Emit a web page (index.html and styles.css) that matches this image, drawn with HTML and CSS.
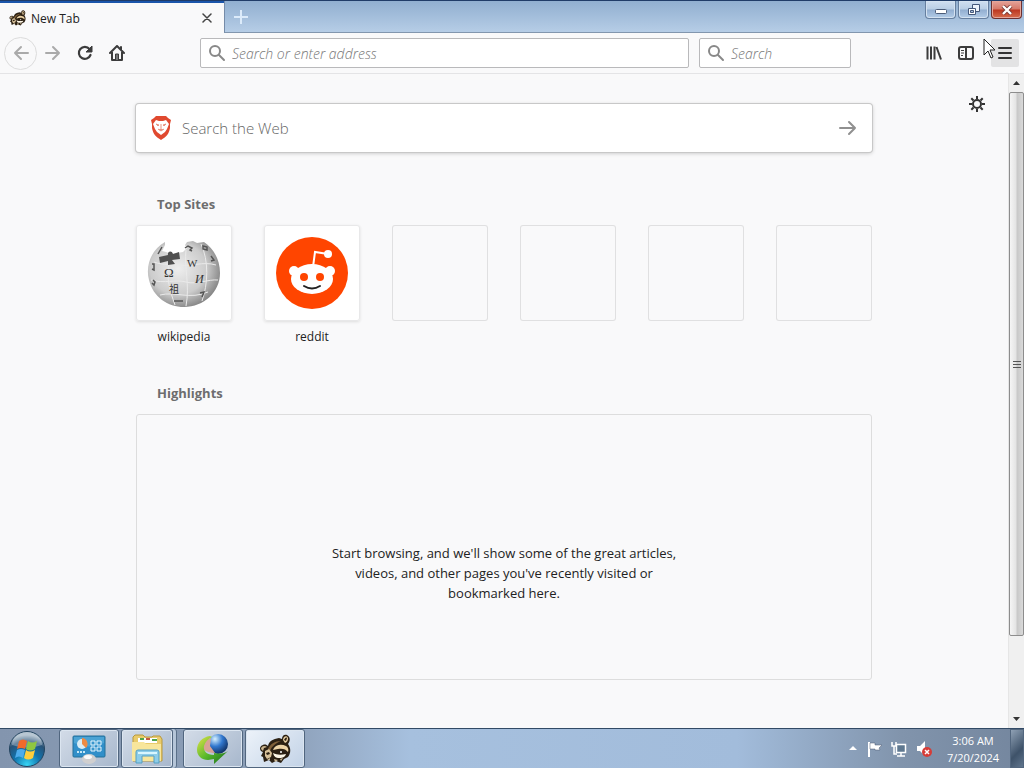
FILE: index.html
```
<!DOCTYPE html>
<html lang="en">
<head>
    <meta charset="UTF-8">
    <meta name="viewport" content="width=device-width, initial-scale=1.0">
    <title>New Tab</title>
    <link rel="stylesheet" href="styles.css">
</head>
<body>
    <!-- raccoon is used by the tab and the taskbar -->
    <svg class="defs" width="0" height="0" aria-hidden="true">
        <symbol id="raccoon" viewBox="0 0 32 30">
            <path d="M4 18C0 17 0 12 4 11c2-1 4 0 5 1 1-5 5-7 11-8l3 1c0-4 3-5 5-4 4 2 3 7 1 9 3 4 3 9 0 13l-4 2-3 4-5-2-4 2-3-3-5 2-1-5-2-1z" fill="#2b2013"/>
            <path d="M2 15c0-3 4-4 6-2l-3 1-1 3z" fill="#c9b48e"/>
            <path d="M24 6c0-4 4-5 5-2 0 3-1 4-3 5z" fill="#e7cfa4"/>
            <path d="M25 6c1-2 2-3 3-2l-1 3z" fill="#2b2013"/>
            <path d="M9 15c2-5 7-8 13-8-5 2-9 5-11 10z" fill="#806039"/>
            <path d="M15 14c3-4 8-4 12-2 2 1 3 4 2 6-2-3-6-4-10-3-2 0-3 1-5 1z" fill="#ecd3a6"/>
            <path d="M6 17l4-2 3 4-1 4-4 2-2-3z" fill="#d9c29a"/>
            <path d="M14 19c4 2 8 2 13 1-1 4-5 4-7 4-3 0-5-1-6-5z" fill="#fdf6e6"/>
            <path d="M15 25l4 1-3 2zM21 25l3-1-2 3zM8 26l3-2v2z" fill="#d0bd9a"/>
            <path d="M7 19l3-1 1 2-3 1z" fill="#2b2013"/>
            <circle cx="22" cy="18" r="1" fill="#fff"/>
        </symbol>
        <symbol id="glass" viewBox="0 0 18 18">
            <circle cx="7" cy="7" r="5" fill="none" stroke="currentColor" stroke-width="2"/>
            <path d="M11 11l5 5" stroke="currentColor" stroke-width="2" stroke-linecap="round"/>
        </symbol>
    </svg>

    <header class="titlebar">
        <div class="tab">
            <svg class="tab-icon" width="17" height="16"><use href="#raccoon"/></svg>
            <span class="tab-title">New Tab</span>
            <button class="tab-close" aria-label="Close tab">
                <svg width="10" height="10" viewBox="0 0 10 10"><path d="M1 1l8 8M9 1L1 9" stroke="#444" stroke-width="1.500" stroke-linecap="round"/></svg>
            </button>
        </div>
        <button class="new-tab" aria-label="New tab">
            <svg width="14" height="14" viewBox="0 0 14 14"><path d="M7 0v14M0 7h14" stroke="#dcebfa" stroke-width="2"/></svg>
        </button>
        <div class="window-buttons">
            <button class="win" aria-label="Minimize">
                <svg class="minimize" width="12" height="6" viewBox="0 0 12 6"><rect x=".5" y=".5" width="11" height="4" rx="1" fill="#fff" stroke="#4b5c78"/></svg>
            </button>
            <button class="win" aria-label="Restore">
                <svg width="12" height="12" viewBox="0 0 12 12"><path d="M4.500.5h7v7h-7z" fill="#eef4fb" stroke="#44587a"/><path d="M.5 4.500h7v6h-7z" fill="#fff" stroke="#44587a"/><path d="M2.500 6.500h3v2h-3z" fill="#a5bddb" stroke="#44587a"/></svg>
            </button>
            <button class="win win-close" aria-label="Close">
                <svg width="12" height="10" viewBox="0 0 12 10"><path d="M2 1l8 8M10 1L2 9" stroke="#7b3934" stroke-width="4"/><path d="M2 1l8 8M10 1L2 9" stroke="#fff" stroke-width="2.400"/></svg>
            </button>
        </div>
    </header>

    <nav class="toolbar">
        <button class="tool back" aria-label="Back">
            <svg width="16" height="16" viewBox="0 0 16 16"><path d="M15 8H2M8 2L2 8l6 6" fill="none" stroke="#aaa" stroke-width="2" stroke-linecap="round" stroke-linejoin="round"/></svg>
        </button>
        <button class="tool" aria-label="Forward">
            <svg width="16" height="16" viewBox="0 0 16 16"><path d="M1 8h13M8 2l6 6-6 6" fill="none" stroke="#aaa" stroke-width="2" stroke-linecap="round" stroke-linejoin="round"/></svg>
        </button>
        <button class="tool" aria-label="Reload">
            <svg width="16" height="16" viewBox="0 0 16 16"><path d="M13.500 10A6 6 0 1 1 12.500 4" fill="none" stroke="#3c3c3c" stroke-width="2.200" stroke-linecap="round"/><path d="M15 1v6H9z" fill="#3c3c3c" stroke="#3c3c3c" stroke-linejoin="round"/></svg>
        </button>
        <button class="tool" aria-label="Home">
            <svg width="16" height="16" viewBox="0 0 16 16"><path d="M1 8l7-7 7 7M3 7v8h10V7M12 2v3" fill="none" stroke="#3c3c3c" stroke-width="2" stroke-linecap="round" stroke-linejoin="round"/><path d="M6.500 15V9h3v6" fill="#777" stroke="#3c3c3c"/></svg>
        </button>
        <label class="field address">
            <svg width="18" height="18"><use href="#glass"/></svg>
            <input type="text" placeholder="Search or enter address" aria-label="Search or enter address">
        </label>
        <label class="field search">
            <svg width="18" height="18"><use href="#glass"/></svg>
            <input type="text" placeholder="Search" aria-label="Search">
        </label>
        <div class="tools-right">
            <button class="tool" aria-label="Library">
                <svg width="16" height="16" viewBox="0 0 16 16"><path d="M1.500 1.500v13M5 1.500v13M8.500 1.500v13M10.500 2l4.500 12.500" fill="none" stroke="#3c3c3c" stroke-width="2"/></svg>
            </button>
            <button class="tool" aria-label="Sidebars">
                <svg width="16" height="16" viewBox="0 0 16 16"><rect x="1" y="2" width="14" height="12" rx="2" fill="none" stroke="#3c3c3c" stroke-width="2"/><path d="M8 2v12" stroke="#3c3c3c" stroke-width="2"/><path d="M3 5.500h3M3 8h3M3 10.500h2" stroke="#3c3c3c"/></svg>
            </button>
            <button class="tool menu" aria-label="Open menu">
                <svg width="14" height="14" viewBox="0 0 14 14"><path d="M1 2h12M1 7h12M1 12h12" stroke="#333" stroke-width="2" stroke-linecap="round"/></svg>
                <svg class="cursor" width="13" height="21" viewBox="0 0 13 21" aria-hidden="true"><path d="M1 1v16l4-4 3 7 2-1-3-7h5z" fill="#fff" stroke="#222"/></svg>
            </button>
        </div>
    </nav>

    <div class="viewport">
        <main class="page">
            <button class="settings" aria-label="Customize your New Tab page">
                <svg width="16" height="16" viewBox="0 0 16 16"><circle cx="8" cy="8" r="4" fill="none" stroke="#333" stroke-width="2"/><path d="M8 0v3M8 13v3M0 8h3M13 8h3M2.300 2.300l2.200 2.200M11.500 11.500l2.200 2.200M2.300 13.700l2.200-2.200M11.500 4.500l2.200-2.200" stroke="#333" stroke-width="2"/></svg>
            </button>
            <div class="content">
                <form class="web-search">
                    <svg width="22" height="26" viewBox="0 0 22 26" aria-hidden="true">
                        <path d="M6 1h10l2 2 3 2-1 4 0 4c-1 6-4 9-9 12-5-3-8-6-9-12V9L1 5l3-2z" fill="#e0492f"/>
                        <path d="M6 5l3 1h4l3-1 3 4-2 5-2 3-4 3-4-3-2-3-2-5z" fill="#fff"/>
                        <path d="M6 9l3 1-1 1zM16 9l-3 1 1 1zM11 9v5M8 14l3 2 3-2" fill="#e89583" stroke="#e89583"/>
                    </svg>
                    <input type="text" placeholder="Search the Web" aria-label="Search the Web">
                    <button type="submit" aria-label="Search">
                        <svg width="18" height="16" viewBox="0 0 18 16"><path d="M1 8h15M10 2l6 6-6 6" fill="none" stroke="#909090" stroke-width="2" stroke-linecap="round" stroke-linejoin="round"/></svg>
                    </button>
                </form>

                <section class="top-sites">
                    <h2>Top Sites</h2>
                    <ul class="sites">
                        <li>
                            <a href="#wikipedia">
                                <span class="tile filled">
                                    <svg width="74" height="74" viewBox="0 0 74 74">
                                        <defs>
                                            <radialGradient id="globe" cx=".42" cy=".42" r=".6"><stop offset="0" stop-color="#eee"/><stop offset=".65" stop-color="#ccc"/><stop offset="1" stop-color="#888"/></radialGradient>
                                        </defs>
                                        <path d="M18 6C5 13-2 29 2 44c4 17 19 27 35 27 20 0 36-15 36-34 0-14-7-25-16-31l-7 1-4-2-6 1-2 3 2 3-4 4-6 1-6 1-5-2-4-1 3-6z" fill="url(#globe)"/>
                                        <path d="M7 26c10 4 18 1 27 3s22-4 35 0M4 44c14 4 24-1 35 2s22-3 32-2M13 59c15-4 30 5 48-3M22 28c-3 14 1 27 6 41M39 14c-2 17 4 35 0 56M54 8c8 17 7 40 1 57" fill="none" stroke="#eaeaea"/>
                                        <path d="M12 21l9-2c-1-4 4-5 5-1l6-2 1 7-8 1 3 4-7 1 0-4-8 2z" fill="#505050"/>
                                        <path d="M38 12l3-2 4 2-2 2 2 1M56 10l4 1 0 3-4-1zM64 20l3 4-3 1M5 28l2 0 0 6-2-1M6 44l2 2-1 3-2-2M27 65h9M53 57l4-1-2 5M15 11l-4 7" fill="none" stroke="#555" stroke-width="1.500"/>
                                        <g fill="#333" font-family="Liberation Serif, serif" font-size="13">
                                            <text x="17" y="41">Ω</text><text x="40" y="31" font-size="11">W</text><text x="48" y="47" font-style="italic" font-size="12">И</text><text x="22" y="57" font-family="Noto Sans CJK JP, sans-serif" font-size="10">祖</text>
                                        </g>
                                    </svg>
                                </span>
                                <span class="site-name">wikipedia</span>
                            </a>
                        </li>
                        <li>
                            <a href="#reddit">
                                <span class="tile filled">
                                    <svg width="72" height="72" viewBox="0 0 72 72">
                                        <circle cx="36" cy="36" r="36" fill="#ff4500"/>
                                        <path d="M37 30l2-15 13 2" fill="none" stroke="#fff" stroke-width="2"/>
                                        <circle cx="52" cy="17" r="4" fill="#fff"/>
                                        <circle cx="18" cy="34" r="5" fill="#fff"/><circle cx="54" cy="34" r="5" fill="#fff"/>
                                        <ellipse cx="36" cy="42" rx="21" ry="15" fill="#fff"/>
                                        <circle cx="28" cy="40" r="4" fill="#ff4500"/><circle cx="44" cy="40" r="4" fill="#ff4500"/>
                                        <path d="M28 49q8 5 16 0" fill="none" stroke="#222" stroke-width="2" stroke-linecap="round"/>
                                    </svg>
                                </span>
                                <span class="site-name">reddit</span>
                            </a>
                        </li>
                        <li><span class="tile"></span></li>
                        <li><span class="tile"></span></li>
                        <li><span class="tile"></span></li>
                        <li><span class="tile"></span></li>
                    </ul>
                </section>

                <section class="highlights">
                    <h2>Highlights</h2>
                    <div class="empty-state">
                        <p>Start browsing, and we'll show some of the great articles, videos, and other pages you've recently visited or bookmarked here.</p>
                    </div>
                </section>
            </div>
        </main>
        <div class="scrollbar">
            <button aria-label="Scroll up"><svg width="7" height="4" viewBox="0 0 7 4"><path d="M0 4l3.500-4L7 4z" fill="#333"/></svg></button>
            <div class="track">
                <div class="thumb"><svg width="8" height="8" viewBox="0 0 8 8"><path d="M0 1.500h8M0 4.500h8M0 7.500h8" stroke="#555"/></svg></div>
            </div>
            <button aria-label="Scroll down"><svg width="7" height="4" viewBox="0 0 7 4"><path d="M0 0l3.500 4L7 0z" fill="#333"/></svg></button>
        </div>
    </div>

    <footer class="taskbar">
        <button class="start" aria-label="Start">
            <svg width="38" height="38" viewBox="0 0 38 38">
                <defs>
                    <radialGradient id="orb" cx=".5" cy=".95" r=".85"><stop offset="0" stop-color="#37d5f5"/><stop offset=".45" stop-color="#1173ad"/><stop offset=".8" stop-color="#285277"/><stop offset="1" stop-color="#9aafc0"/></radialGradient>
                </defs>
                <circle cx="19" cy="19" r="17.500" fill="url(#orb)" stroke="#23445f"/>
                <path d="M4 15a15 13 0 0 1 30 0q-15 5-30 0z" fill="#fff" opacity=".3"/>
                <path d="M11 11q4-3 8 0l-2 8q-4-2-8 0z" fill="#f06a2b"/>
                <path d="M20 11q4 3 9 0l-2 8q-5 3-9 0z" fill="#8fc740"/>
                <path d="M9 20q4-2 8 0l-2 8q-4-3-8 0z" fill="#4dacec"/>
                <path d="M18 20q4 3 9 0l-2 8q-5 3-9 0z" fill="#ffce3c"/>
            </svg>
        </button>
        <button class="task" aria-label="Control Panel">
            <svg width="34" height="30" viewBox="0 0 34 30">
                <rect x="1" y="2" width="32" height="21" rx="1" fill="#318fc9" stroke="#247099"/>
                <path d="M2 3h30v6q-15 7-30 0z" fill="#4ba3d4"/>
                <circle cx="10" cy="10" r="5" fill="#d9edf6"/><path d="M10 10V4a6 6 0 0 1 4 10z" fill="#ed8b43"/>
                <path d="M19 7h4v4h-4zM25 7h4v4h-4zM19 13h4v4h-4zM25 13h4v4h-4z" fill="#3a96cc" stroke="#e5f6ff"/>
                <path d="M5 18h9" stroke="#c5e7f5" stroke-width="2" stroke-dasharray="2 1"/>
                <ellipse cx="17" cy="25" rx="7" ry="5" fill="#d0cfcf"/><ellipse cx="16" cy="23" rx="4" ry="2" fill="#fafafa"/>
            </svg>
        </button>
        <button class="task stacked" aria-label="Windows Explorer">
            <svg width="34" height="30" viewBox="0 0 34 30">
                <path d="M3 3l2-2h8l2 2h7l1-1h7l2 3v22H3z" fill="#e9cb6b" stroke="#b8983d"/>
                <path d="M8 4h19v5H8z" fill="#fff"/><path d="M10 5h4M22 6h5" stroke="#4ea44b" stroke-width="2"/><path d="M16 5h4" stroke="#c45943" stroke-width="2"/>
                <path d="M2 8h12l2 2h15v17H2z" fill="#f8e69c"/>
                <path d="M6 29V18q0-2 2-2h19q2 0 2 2v11h-5v-7H12v7z" fill="#8ecde9" stroke="#559fc3"/>
                <path d="M8 19h19" stroke="#d9f6ff" stroke-width="2"/>
            </svg>
        </button>
        <button class="task" aria-label="Download Manager">
            <svg width="34" height="32" viewBox="0 0 34 32">
                <defs>
                    <radialGradient id="ball" cx=".35" cy=".25" r=".75"><stop offset="0" stop-color="#d8f2ff"/><stop offset=".5" stop-color="#3278cf"/><stop offset="1" stop-color="#123368"/></radialGradient>
                    <linearGradient id="arrow" x2="1" y2="1"><stop offset="0" stop-color="#e2e34a"/><stop offset=".5" stop-color="#58b92a"/><stop offset="1" stop-color="#14661c"/></linearGradient>
                </defs>
                <circle cx="22" cy="11" r="10" fill="url(#ball)"/>
                <path d="M6 12q3-5 9-7l-1 8 5 7q-8 0-12-4z" fill="#d8a394"/>
                <path d="M14 3C6 4 1 10 1 17c0 6 5 10 11 10l6-1v5l14-13c-4 3-9 3-14 2v2C11 22 7 18 8 13c1-4 4-7 8-9z" fill="url(#arrow)"/>
            </svg>
        </button>
        <button class="task active" aria-label="New Tab">
            <svg width="34" height="30"><use href="#raccoon"/></svg>
        </button>
        <div class="tray">
            <svg width="8" height="5" viewBox="0 0 8 5"><path d="M0 4l4-4 4 4z" fill="#fff"/></svg>
            <svg width="16" height="18" viewBox="0 0 16 18"><path d="M3 2v15" stroke="#fff" stroke-width="2"/><path d="M4 3h5v2h7l-3 3 1 2H9V9H4z" fill="#fff" stroke="#4c5b70" stroke-width=".5"/></svg>
            <svg width="16" height="18" viewBox="0 0 16 18"><rect x="5.500" y="4.500" width="9" height="8" fill="#5f7890" stroke="#fff" stroke-width="1.500"/><path d="M6 16h8M10 13v3M1 2v4h4V2M3 6v8h3" fill="none" stroke="#fff" stroke-width="1.500"/></svg>
            <svg width="17" height="18" viewBox="0 0 17 18"><path d="M1 6h3l5-5v15l-5-5H1z" fill="#fff"/><circle cx="11" cy="12" r="5" fill="#d63c37"/><path d="M9 10l4 4M13 10l-4 4" stroke="#fff" stroke-width="1.500"/></svg>
            <div class="clock"><time>3:06 AM</time><time>7/20/2024</time></div>
        </div>
        <button class="show-desktop" aria-label="Show desktop"></button>
    </footer>
</body>
</html>
```
FILE: styles.css
```
* {
    box-sizing: border-box;
}
body {
    margin: 0;
    min-height: 100vh;
    display: flex;
    flex-direction: column;
    background-color: #f9f9fa;
    color: #222;
    font-family: "Open Sans", "Noto Sans", sans-serif;
    font-size: 12px;
}
svg {
    display: block;
    flex: none;
}
.defs {
    position: absolute;
}
button {
    display: flex;
    align-items: center;
    justify-content: center;
    padding: 0;
    border: none;
    background: none;
    flex: none;
}
input {
    flex: 1;
    min-width: 0;
    padding: 0;
    border: none;
    outline: none;
    background: none;
    font-family: inherit;
}

/* title bar */
.titlebar {
    display: flex;
    height: 33px;
    border-top: 1px solid #203c68;
    background: linear-gradient(#91afd0, #b7cee7);
}
.tab {
    display: flex;
    align-items: center;
    width: 224px;
    padding: 0 10px 0 9px;
    background-color: #f9f9fa;
    border-top: 2px solid #1b55ab;
}
.tab-title {
    flex: 1;
    margin-left: 5px;
}
.tab-close {
    width: 14px;
    height: 20px;
}
.new-tab {
    width: 32px;
    border-left: 1px solid #758ba8;
    border-bottom: 1px solid #8296ae;
}
.window-buttons {
    flex: 1;
    display: flex;
    justify-content: flex-end;
    gap: 2px;
    padding-right: 2px;
    border-bottom: 1px solid #8296ae;
}
.win {
    width: 31px;
    height: 18px;
    border: 1px solid #667f9f;
    border-top: none;
    border-radius: 0 0 4px 4px;
    background: linear-gradient(#d0dff0 0%, #b9cee5 48%, #92aed0 52%, #b3cce7 100%);
    box-shadow: inset 0 0 0 1px #d4e2f1;
}
.minimize {
    margin-top: 4px;
}
.win-close {
    border-color: #6d3030;
    background: linear-gradient(#e5a39a 0%, #d67868 48%, #bc3620 52%, #d66d4d 100%);
    box-shadow: inset 0 0 0 1px #e5a69a;
}

/* toolbar */
.toolbar {
    display: flex;
    align-items: center;
    height: 41px;
    padding: 0 5px 0 4px;
    border-bottom: 1px solid #e4e4e6;
}
.tool {
    width: 32px;
    height: 28px;
}
.back {
    width: 33px;
    height: 33px;
    border: 1px solid #dcdcdc;
    border-radius: 50%;
}
.field {
    display: flex;
    align-items: center;
    gap: 6px;
    height: 30px;
    padding: 0 7px;
    border: 1px solid #b9b9bb;
    border-radius: 2px;
    background-color: #fff;
    color: #888;
}
.field input {
    font-size: 14px;
}
.field input::placeholder {
    color: #777;
    font-style: italic;
    font-weight: 300;
}
.address {
    flex: 1;
    margin-left: 67px;
}
.search {
    width: 152px;
    margin: 0 67px 0 10px;
}
.tools-right {
    display: flex;
}
.menu {
    position: relative;
    width: 28px;
    margin-left: 9px;
    border-radius: 2px;
    background-color: #e3e3e4;
}
.cursor {
    position: absolute;
    left: -8px;
    top: -1px;
}

/* new tab page */
.viewport {
    flex: 1;
    display: flex;
}
.page {
    position: relative;
    flex: 1;
    padding: 30px 32px 48px;
}
.settings {
    position: absolute;
    top: 22px;
    right: 23px;
}
.content {
    max-width: 736px;
    margin: 0 auto;
}
.web-search {
    display: flex;
    align-items: center;
    height: 48px;
    padding: 0 15px 0 14px;
    border-radius: 3px;
    background-color: #fff;
    box-shadow: 0 0 0 1px #c8c8c8, 0 1px 4px #bbb;
}
.web-search input {
    margin-left: 10px;
    font-size: 15px;
}
.web-search input::placeholder {
    color: #666;
    font-weight: 300;
}
h2 {
    margin: 0 0 11px 21px;
    font-size: 13px;
    line-height: 20px;
    color: #6d6d6e;
}
.top-sites {
    margin-top: 42px;
}
.sites {
    display: grid;
    grid-template-columns: repeat(auto-fill, 96px);
    gap: 32px;
    margin: 0;
    padding: 0;
    list-style: none;
}
.sites a {
    color: #222;
    text-decoration: none;
}
.tile {
    display: flex;
    align-items: center;
    justify-content: center;
    height: 96px;
    border-radius: 3px;
    box-shadow: inset 0 0 0 1px #e0e0e1;
}
.filled {
    background-color: #fff;
    box-shadow: inset 0 0 0 1px #e8e8e9, 0 1px 3px #ddd;
}
.site-name {
    display: block;
    padding-top: 6px;
    line-height: 20px;
    font-size: 12px;
    text-align: center;
}
.highlights {
    margin-top: 36px;
}
.empty-state {
    display: flex;
    align-items: center;
    justify-content: center;
    height: 266px;
    padding-top: 52px;
    border: 1px solid #ddd;
    border-radius: 3px;
}
.empty-state p {
    max-width: 350px;
    margin: 0;
    font-size: 13px;
    line-height: 20px;
    text-align: center;
}

/* scrollbar */
.scrollbar {
    display: flex;
    flex-direction: column;
    width: 16px;
    background-color: #f0f0f0;
    border-left: 1px solid #e6e6e6;
}
.scrollbar button {
    height: 18px;
}
.track {
    flex: 1;
}
.thumb {
    display: flex;
    align-items: center;
    justify-content: center;
    height: 88%;
    border: 1px solid #8d8d8d;
    border-radius: 2px;
    background: linear-gradient(to right, #f5f5f5, #e4e4e4 45%, #c8c8c8 55%, #dadada);
}

/* taskbar */
.taskbar {
    display: flex;
    height: 40px;
    border-top: 1px solid #324a65;
    background: linear-gradient(to right, #8395ae 0%, #8da0b9 28%, #a6c0de 40%, #a2bcdb 72%, #8194ac 88%, #74869e 100%);
}
.start {
    width: 54px;
}
.task {
    width: 60px;
    margin: 0 0 0 2px;
    border: 1px solid #51667f;
    border-radius: 3px;
    background: linear-gradient(135deg, #d3dce8, #a7b7cc);
    box-shadow: inset 0 0 0 1px #dbe5f0;
}
.start + .task {
    margin-left: 5px;
}
.stacked {
    width: 52px;
    margin-right: 8px;
    box-shadow: inset 0 0 0 1px #dbe5f0, 3px 0 0 #b5c5d8, 4px 0 0 #5b7089;
}
.active {
    background: linear-gradient(135deg, #edf3fa, #c2d2e6);
}
.tray {
    display: flex;
    align-items: center;
    gap: 9px;
    margin-left: auto;
    padding-right: 10px;
}
.clock {
    display: flex;
    flex-direction: column;
    width: 54px;
    margin-left: 4px;
    color: #fff;
    font-size: 11px;
    line-height: 17px;
    text-align: center;
    white-space: nowrap;
}
.show-desktop {
    width: 14px;
    border: 1px solid #52667e;
    background: linear-gradient(135deg, #8fa1b5, #3e5269 60%, #60758d);
}
```
